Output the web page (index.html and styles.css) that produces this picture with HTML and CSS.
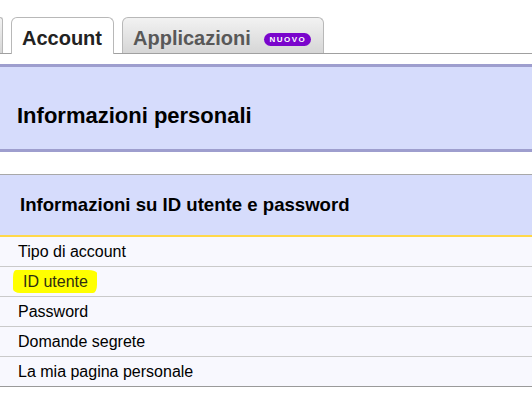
FILE: index.html
```html
<!DOCTYPE html>
<html lang="it">
<head>
    <meta charset="UTF-8">
    <title>Account</title>
    <link rel="stylesheet" href="styles.css">
</head>
<body>
    <div class="tabs">
        <div class="tab stub"></div>
        <div class="tab active">Account</div>
        <div class="tab">Applicazioni <span class="badge">NUOVO</span></div>
    </div>

    <div class="page-title">Informazioni personali</div>

    <div class="section">
        <div class="section-head">Informazioni su ID utente e password</div>
        <div class="row">Tipo di account</div>
        <div class="row"><span class="marker">ID utente</span></div>
        <div class="row">Password</div>
        <div class="row">Domande segrete</div>
        <div class="row last">La mia pagina personale</div>
    </div>
</body>
</html>
```

FILE: styles.css
```css
body {
    margin: 0;
    font-family: "Liberation Sans", Arial, sans-serif;
    background: #fff;
    color: #000;
    overflow: hidden;
}

.tabs {
    display: flex;
    align-items: flex-end;
    gap: 8px;
    padding-top: 17px;
    height: 36px;
    border-bottom: 1px solid #a0a0a0;
}

.tab {
    box-sizing: border-box;
    height: 36px;
    padding: 4px 12px 0 10px;
    line-height: 32px;
    font-size: 20px;
    font-weight: bold;
    color: #585858;
    border: 1px solid #b8b8b8;
    border-bottom: none;
    border-radius: 6px 6px 0 0;
    background: linear-gradient(#f2f2f2, #d6d6d6);
    white-space: nowrap;
}

.tab.stub {
    width: 3px;
    padding: 0;
    border-left: none;
    border-radius: 0 6px 0 0;
}

.tab.active {
    height: 37px;
    margin-bottom: -1px;
    padding-right: 11px;
    background: #fff;
    color: #222;
}

.badge {
    display: inline-block;
    vertical-align: 3px;
    margin-left: 8px;
    width: 47px;
    height: 13px;
    line-height: 13px;
    border-radius: 7px;
    background: #7a05cc;
    color: #fff;
    font-size: 8px;
    letter-spacing: 1.5px;
    text-align: center;
}

.page-title {
    margin-top: 10px;
    padding: 36px 17px 20px;
    line-height: 26px;
    font-size: 22px;
    font-weight: bold;
    background: #d6dcfc;
    border-top: 3px solid #9e9ece;
    border-bottom: 3px solid #9e9ece;
}

.section {
    margin-top: 22px;
    border-top: 1px solid #a8a8a8;
}

.section-head {
    padding: 19px 20px;
    line-height: 22px;
    font-size: 18.6px;
    font-weight: bold;
    background: #d6dcfc;
    border-bottom: 2px solid #ffd84a;
}

.row {
    padding-left: 18px;
    line-height: 29px;
    font-size: 16px;
    background: #f8f8fe;
    border-bottom: 1px solid #cacaca;
}

.row.last {
    border-bottom-color: #9a9a9a;
}

.marker {
    display: inline-block;
    margin-left: -5px;
    padding: 0 9px 0 10px;
    line-height: 23px;
    background: #ffff00;
    color: #2e2e10;
    border-radius: 3px 9px 4px 7px / 7px 3px 8px 4px;
}
```
